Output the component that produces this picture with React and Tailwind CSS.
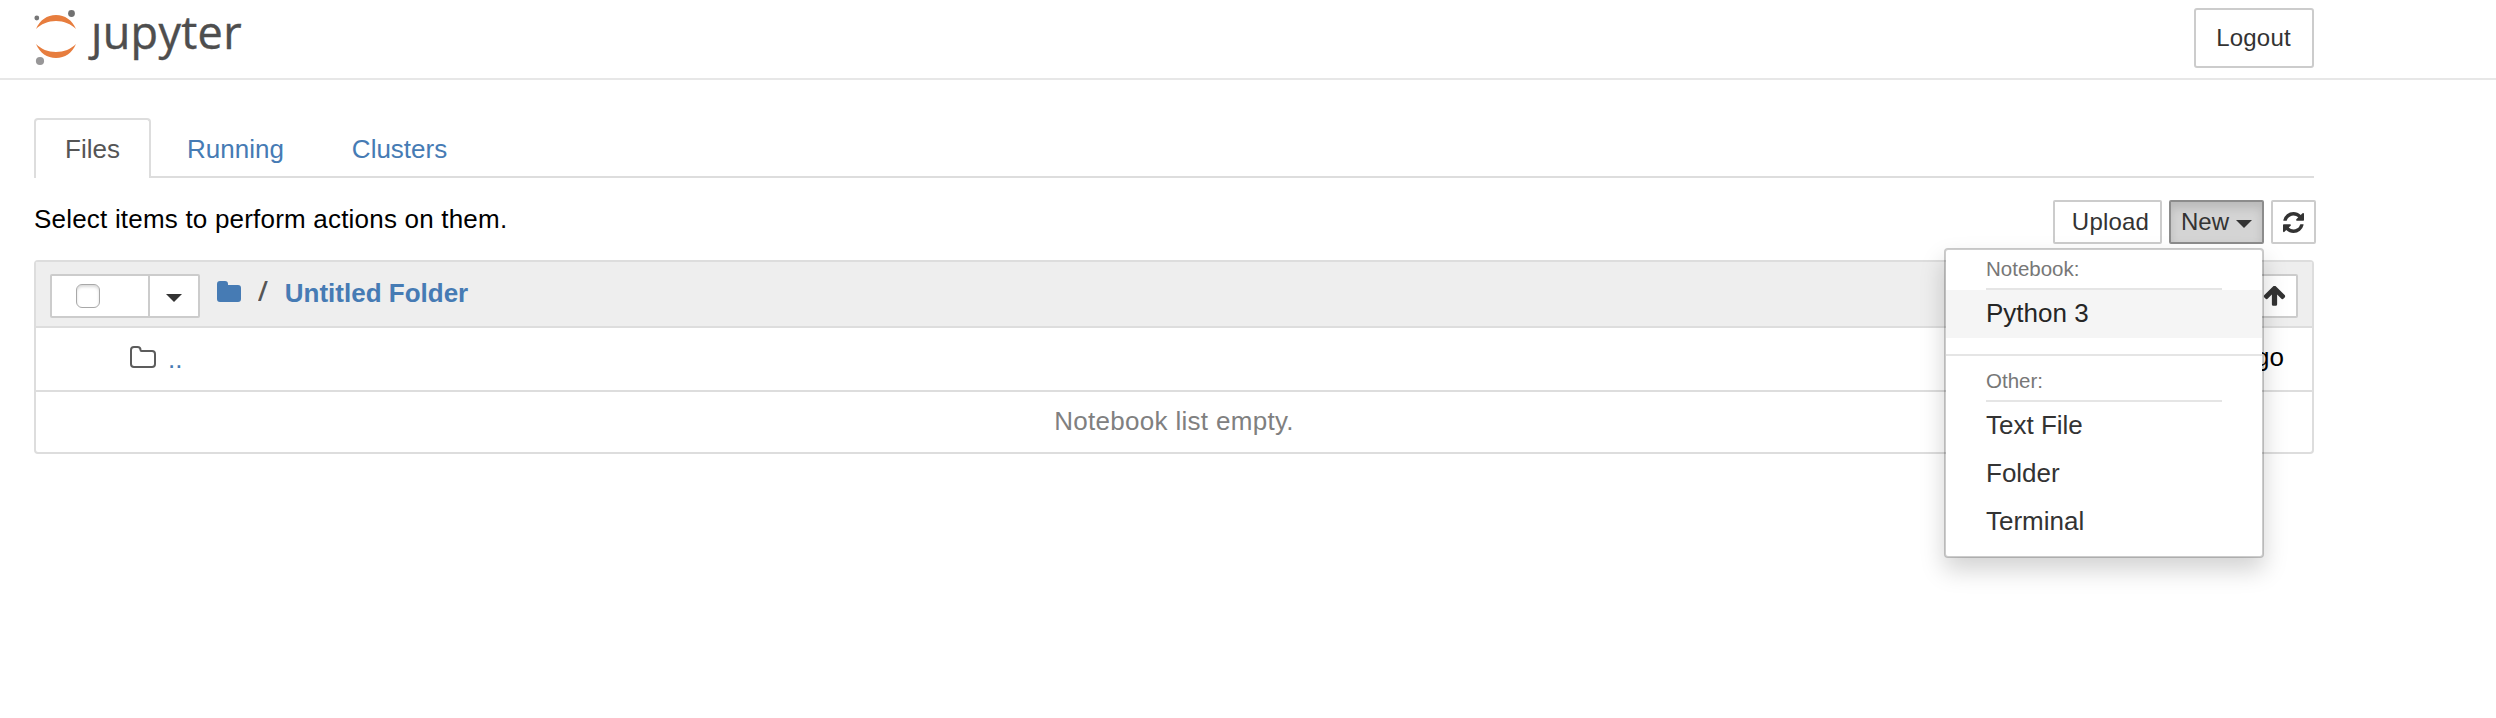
function Caret({ className }) {
  return <span className={"inline-block h-0 w-0 border-x-8 border-t-8 border-x-transparent border-t-[#333] " + (className || "")} />;
}

function Logo() {
  return (
    <div className="flex">
      <svg className="ml-[34px] mt-[8px] h-[60px] w-[44px] shrink-0" viewBox="34 8 44 60">
        <path d="M36 29C40 20 47 15 56 15s16 5 20 14c-5-5-12-8-20-8s-15 3-20 8z" fill="#e77d3e" />
        <path d="M36 44c4 9 11 14 20 14s16-5 20-14c-5 5-12 8-20 8s-15-3-20-8z" fill="#e77d3e" />
        <circle cx="71.5" cy="13.5" r="3.4" fill="#717171" />
        <circle cx="36.8" cy="18" r="2.4" fill="#767677" />
        <circle cx="40" cy="61" r="4.1" fill="#989798" />
      </svg>
      <span className="ml-[13px] mt-[2px] font-['Open_Sans',sans-serif] text-[45px] tracking-[0.3px] leading-[60px] text-[#4e4e4e] [-webkit-text-stroke:0.4px_#4e4e4e]">ȷupyter</span>
    </div>
  );
}

const item = "flex h-12 items-center pb-[2px] pl-10 text-[26px] text-[#333]";
const heading = "mx-10 flex h-10 items-center border-b-2 border-[#e5e5e5] text-[20.5px] text-[#777]";

export default function App() {
  return (
    <div className="h-[718px] w-[2496px] overflow-hidden bg-white font-['Liberation_Sans',sans-serif] text-[26px] text-black">
      <header className="flex h-20 items-start justify-between border-b-2 border-[#e7e7e7]">
        <Logo />
        <button className="mr-[182px] mt-2 h-[60px] w-[120px] rounded-[3px] border-2 border-[#ccc] pr-[1px] text-[24px] tracking-[0.2px] text-[#333]">Logout</button>
      </header>
      <main className="ml-[34px] w-[2280px] pt-[38px]">
        <nav className="flex h-[60px] border-b-2 border-[#ddd] text-[#467bb4]">
          <a className="h-[60px] w-[117px] rounded-t-[4px] border-2 border-b-0 border-[#ddd] bg-white pl-[29px] leading-[58px] text-[#555]">Files</a>
          <a className="ml-[36px] leading-[62px]">Running</a>
          <a className="ml-[68px] leading-[62px]">Clusters</a>
        </nav>
        <div className="-mr-[2px] flex h-[82px] items-start pt-[22px]">
          <span className="mr-auto leading-[38px] tracking-[0.2px]">Select items to perform actions on them.</span>
          <button className="h-11 w-[109px] rounded-[2px] border-2 border-[#ccc] pl-[6px] text-[24px] tracking-[0.2px] text-[#333]">Upload</button>
          <div className="relative ml-[7px]">
            <button className="flex h-11 w-[95px] items-center rounded-[2px] border-2 border-[#8c8c8c] bg-[#d4d4d4] pl-[10px] text-[24px] text-[#333] shadow-[inset_0_6px_10px_rgba(0,0,0,0.125)]">
              New
              <Caret className="ml-[7px] mt-1" />
            </button>
            <div className="absolute right-0 top-12 z-10 h-[310px] w-[320px] rounded-[4px] border-2 border-black/20 bg-white bg-clip-padding shadow-[0_12px_24px_rgba(0,0,0,0.175)]">
              <div className={heading}>Notebook:</div>
              <div className={item + " bg-[#f5f5f5] !text-[#262626]"}>Python 3</div>
              <div className="mb-1.5 mt-4 h-[2px] bg-[#e5e5e5]" />
              <div className={heading}>Other:</div>
              <div className={item}>Text File</div>
              <div className={item}>Folder</div>
              <div className={item}>Terminal</div>
            </div>
          </div>
          <button className="ml-[7px] flex h-11 w-[45px] items-center justify-center rounded-[2px] border-2 border-[#ccc] text-[#333]">
            <svg viewBox="0 0 1536 1536" className="h-[21px] w-[21px] fill-current">
              <path d="M1511 928q0 5-1 7-64 268-268 434.500t-478 166.500q-146 0-282.500-55t-243.500-157l-129 129q-19 19-45 19t-45-19-19-45v-448q0-26 19-45t45-19h448q26 0 45 19t19 45-19 45l-137 137q71 66 161 102t187 36q134 0 250-65t186-179q11-17 53-117 8-23 30-23h192q13 0 22.500 9.500t9.500 22.500zM1536 128v448q0 26-19 45t-45 19h-448q-26 0-45-19t-19-45 19-45l138-138q-148-137-349-137-134 0-250 65t-186 179q-11 17-53 117-8 23-30 23h-199q-13 0-22.500-9.500t-9.500-22.500v-7q65-268 270-434.500t480-166.500q146 0 284 55.500t245 156.500l130-129q19-19 45-19t45 19 19 45z" />
            </svg>
          </button>
        </div>
        <section className="h-[194px] rounded-[4px] border-2 border-[#ddd]">
          <div className="flex h-[66px] items-start border-b-2 border-[#ddd] bg-[#eee] px-[14px] pt-3">
            <div className="flex h-11 w-[150px] rounded-[2px] border-2 border-[#ccc] bg-white">
              <div className="w-[98px] border-r-2 border-[#ccc] pl-6 pt-[8px]">
                <div className="h-6 w-6 rounded-[6px] border border-[#a8a8a8] bg-white shadow-[inset_0_2px_3px_rgba(0,0,0,0.15)]" />
              </div>
              <div className="flex flex-1 items-center justify-center pt-[4px]"><Caret /></div>
            </div>
            <svg viewBox="0 0 24 21" className="ml-[17px] mt-[7px] h-[21px] w-6 fill-[#467bb4]">
              <path d="M0 3Q0 0 3 0H8Q11 0 11 3V4H21Q24 4 24 7V18Q24 21 21 21H3Q0 21 0 18Z" />
            </svg>
            <span className="ml-[18px] scale-x-125 text-[28px] leading-[36px] text-[#555]">/</span>
            <span className="ml-[18px] font-bold leading-[38px] text-[#467bb4]">Untitled Folder</span>
            <button className="ml-auto flex h-11 w-[48px] items-center justify-center rounded-[2px] border-2 border-[#ccc] bg-white text-[#333]">
              <svg viewBox="0 0 1664 1536" className="h-[21px] w-[23px] fill-current"><path d="M1611 757q0 51-37 90l-75 75q-38 38-91 38-54 0-90-38l-294-293v704q0 52-37.500 84.500t-90.500 32.500h-128q-53 0-90.500-32.500t-37.500-84.500v-704l-294 293q-36 38-90 38t-90-38l-75-75q-38-38-38-90 0-53 38-91l651-651q35-37 90-37 54 0 91 37l651 651q37 39 37 91z" /></svg>
            </button>
          </div>
          <div className="flex h-16 items-start border-b-2 border-[#ddd] pt-3">
            <svg viewBox="0 0 26 22" className="ml-[94px] mt-[6px] h-[22px] w-[26px] fill-none stroke-[#5c5c5c] stroke-2">
              <path d="M1 4Q1 1 4 1H7.500Q10.500 1 10.500 4Q10.500 5 11.500 5H22Q25 5 25 8V18Q25 21 22 21H4Q1 21 1 18Z" />
            </svg>
            <span className="ml-[12px] leading-[38px] text-[#467bb4]">..</span>
            <span className="ml-auto mr-[28px] leading-[34px]">ago</span>
          </div>
          <div className="pt-[10px] text-center leading-[38px] tracking-[0.3px] text-[#808080]">Notebook list empty.</div>
        </section>
      </main>
    </div>
  );
}
